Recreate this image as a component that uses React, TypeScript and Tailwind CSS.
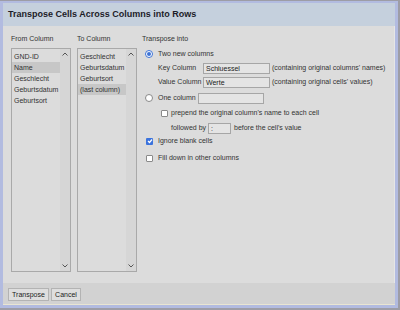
import React from "react";

const fromColumns = ["GND-ID", "Name", "Geschlecht", "Geburtsdatum", "Geburtsort"];
const toColumns = ["Geschlecht", "Geburtsdatum", "Geburtsort", "(last column)"];

function Chevron({ up }: { up?: boolean }) {
  return (
    <svg width="6" height="4" viewBox="0 0 6 4" className="block">
      <polyline
        points={up ? "0.5,3.5 3,1 5.5,3.5" : "0.5,0.5 3,3 5.5,0.5"}
        fill="none"
        stroke="#555"
        strokeWidth="1"
      />
    </svg>
  );
}

function ColumnList({ items, selected }: { items: string[]; selected: string }) {
  return (
    <div className="flex h-[224px] w-[60px] border border-[#a9a9a9] bg-[#dcdcdc]">
      <div className="flex-1 pt-[2px]">
        {items.map((item) => (
          <div
            key={item}
            className={`h-[11px] pl-[2px] leading-[11px] whitespace-nowrap ${
              item === selected ? "bg-[#c7c7c7]" : ""
            }`}
          >
            {item}
          </div>
        ))}
      </div>
      <div className="flex w-[10px] flex-col items-center justify-between bg-[#d6d6d6] py-[3px]">
        <Chevron up />
        <Chevron />
      </div>
    </div>
  );
}

function Radio({ checked }: { checked?: boolean }) {
  return (
    <span
      className={`flex h-[8px] w-[8px] items-center justify-center rounded-full border bg-white ${
        checked ? "border-[#3d73d6]" : "border-[#8a8a8a]"
      }`}
    >
      {checked && <span className="block h-[4px] w-[4px] rounded-full bg-[#3d73d6]" />}
    </span>
  );
}

function Checkbox({ checked }: { checked?: boolean }) {
  return checked ? (
    <span className="flex h-[7px] w-[7px] items-center justify-center rounded-[1px] bg-[#3b73dd]">
      <svg width="6" height="6" viewBox="0 0 6 6">
        <polyline points="1,3 2.5,4.5 5,1.5" fill="none" stroke="#fff" strokeWidth="1.2" />
      </svg>
    </span>
  ) : (
    <span className="block h-[7px] w-[7px] rounded-[1px] border border-[#8a8a8a] bg-white" />
  );
}

function TextBox({ value, className }: { value?: string; className: string }) {
  return (
    <div
      className={`h-[11px] border border-[#a6a6a6] bg-[#e4e4e4] pl-[2px] leading-[9px] text-[#222] ${className}`}
    >
      {value}
    </div>
  );
}

export default function App() {
  return (
    <div className="h-[310px] w-[400px] bg-[#9d9da6] pt-[1px] font-['Liberation_Sans',Arial,sans-serif] text-[7px] text-[#333]">
      <div className="flex h-[307px] w-[398px] flex-col border-[3px] border-t-2 border-[#b2bbe0]">
        {/* Header */}
        <div className="flex h-[23px] items-center bg-[#c5d0dd] pl-[5px] text-[9px] font-bold text-[#1c1c28]">
          Transpose Cells Across Columns into Rows
        </div>

        {/* Body */}
        <div className="flex flex-1 gap-[5px] border-r border-[#e6e6e6] bg-[#dcdcdc] pl-[8px] pt-[8px]">
          <div className="flex flex-col">
            <div className="h-[9px] leading-[9px]">From Column</div>
            <div className="mt-[5px]">
              <ColumnList items={fromColumns} selected="Name" />
            </div>
          </div>
          <div className="ml-[1px] flex flex-col">
            <div className="h-[9px] leading-[9px]">To Column</div>
            <div className="mt-[5px]">
              <ColumnList items={toColumns} selected="(last column)" />
            </div>
          </div>

          <div className="flex flex-col">
            <div className="h-[9px] leading-[9px]">Transpose into</div>

            <div className="mt-[4px] flex h-[14px] items-center">
              <span className="ml-[3px] mr-[5px]">
                <Radio checked />
              </span>
              Two new columns
            </div>
            <div className="flex h-[14px] items-center pl-[16px]">
              <span className="w-[45px]">Key Column</span>
              <TextBox value="Schluessel" className="w-[67px]" />
              <span className="ml-[2px] whitespace-nowrap">(containing original columns' names)</span>
            </div>
            <div className="flex h-[14px] items-center pl-[16px]">
              <span className="w-[45px] whitespace-nowrap">Value Column</span>
              <TextBox value="Werte" className="w-[67px]" />
              <span className="ml-[2px] whitespace-nowrap">(containing original cells' values)</span>
            </div>

            <div className="mt-[2px] flex h-[14px] items-center">
              <span className="ml-[3px] mr-[5px]">
                <Radio />
              </span>
              <span className="w-[40px]">One column</span>
              <TextBox className="w-[66px]" />
            </div>
            <div className="flex h-[17px] items-center pl-[19px]">
              <span className="mr-[3px]">
                <Checkbox />
              </span>
              prepend the original column's name to each cell
            </div>
            <div className="flex h-[12px] items-center pl-[29px]">
              <span className="w-[37px]">followed by</span>
              <TextBox value=":" className="w-[23px]" />
              <span className="ml-[3px]">before the cell's value</span>
            </div>

            <div className="flex h-[14px] items-center">
              <span className="ml-[4px] mr-[5px]">
                <Checkbox checked />
              </span>
              Ignore blank cells
            </div>
            <div className="flex h-[20px] items-center">
              <span className="ml-[4px] mr-[5px]">
                <Checkbox />
              </span>
              Fill down in other columns
            </div>
          </div>
        </div>

        {/* Footer */}
        <div className="flex h-[22px] gap-[2px] border-b border-[#e9e5d2] bg-[#d2d2d2] pl-[5px] pt-[5px]">
          <button className="h-[13px] w-[41px] border border-[#b3b3b3] bg-[#dedede] text-[7px] leading-[11px] text-[#222]">
            Transpose
          </button>
          <button className="h-[13px] w-[30px] border border-[#b3b3b3] bg-[#dedede] text-[7px] leading-[11px] text-[#222]">
            Cancel
          </button>
        </div>
      </div>
    </div>
  );
}
